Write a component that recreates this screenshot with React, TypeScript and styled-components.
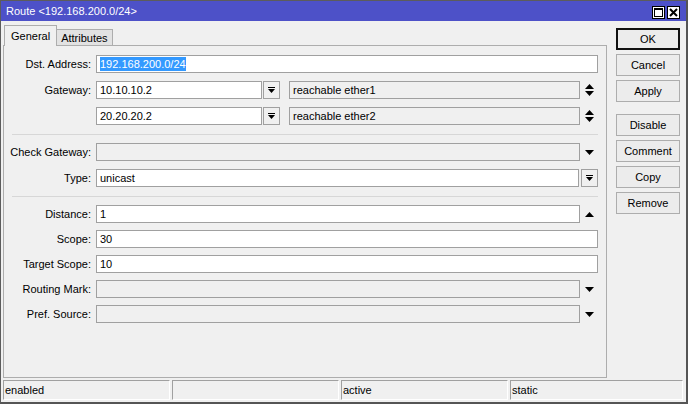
import styled, { createGlobalStyle } from "styled-components";

const GlobalStyle = createGlobalStyle`
    body {
        margin: 0;
        background: #ffffff;
        font-family: "Liberation Sans", Arial, sans-serif;
        font-size: 11px;
        color: #000000;
    }
`;

const DropIcon = () => (
    <svg width="7" height="7" viewBox="0 0 7 7">
        <rect x="0" y="0" width="7" height="1" fill="#000" />
        <polygon points="0,2 7,2 3.5,6" fill="#000" />
    </svg>
);

const UpDownIcon = () => (
    <svg width="9" height="12" viewBox="0 0 9 12">
        <polygon points="4.5,0 9,5 0,5" fill="#000" />
        <polygon points="0,7 9,7 4.5,12" fill="#000" />
    </svg>
);

const ArrowIcon = ({ up }: { up?: boolean }) => (
    <svg width="9" height="5" viewBox="0 0 9 5">
        {up ? <polygon points="4.5,0 9,5 0,5" fill="#000" /> : <polygon points="0,0 9,0 4.5,5" fill="#000" />}
    </svg>
);

const MaxIcon = () => (
    <svg width="9" height="9" viewBox="0 0 9 9">
        <rect x="0.5" y="0.5" width="8" height="8" fill="none" stroke="#000" />
        <rect x="0" y="0" width="9" height="2" fill="#000" />
    </svg>
);

const CloseIcon = () => (
    <svg width="9" height="9" viewBox="0 0 9 9">
        <path d="M1 1 L8 8 M8 1 L1 8" stroke="#000" strokeWidth="2" />
    </svg>
);

const App = () => {
    return (
        <>
            <GlobalStyle />
            <Window>
                <TitleBar>
                    <TitleText>Route &lt;192.168.200.0/24&gt;</TitleText>
                    <TitleButtons>
                        <TitleButton><MaxIcon /></TitleButton>
                        <TitleButton><CloseIcon /></TitleButton>
                    </TitleButtons>
                </TitleBar>
                <Body>
                    <Main>
                        <Tabs>
                            <Tab $active>General</Tab>
                            <Tab>Attributes</Tab>
                        </Tabs>
                        <Panel>
                            <Group>
                                <Row>
                                    <Label>Dst. Address:</Label>
                                    <Field>
                                        <Selected>192.168.200.0/24</Selected>
                                    </Field>
                                </Row>
                                <Row>
                                    <Label>Gateway:</Label>
                                    <Field $width={166}>10.10.10.2</Field>
                                    <DropButton $ml={1}><DropIcon /></DropButton>
                                    <Field $disabled $ml={9}>reachable ether1</Field>
                                    <IconSlot><UpDownIcon /></IconSlot>
                                </Row>
                                <Row>
                                    <Label></Label>
                                    <Field $width={166}>20.20.20.2</Field>
                                    <DropButton $ml={1}><DropIcon /></DropButton>
                                    <Field $disabled $ml={9}>reachable ether2</Field>
                                    <IconSlot><UpDownIcon /></IconSlot>
                                </Row>
                            </Group>
                            <Separator />
                            <Group>
                                <Row>
                                    <Label>Check Gateway:</Label>
                                    <Field $disabled />
                                    <IconSlot><ArrowIcon /></IconSlot>
                                </Row>
                                <Row>
                                    <Label>Type:</Label>
                                    <Field>unicast</Field>
                                    <DropButton $ml={2}><DropIcon /></DropButton>
                                </Row>
                            </Group>
                            <Separator />
                            <Group $gap={7}>
                                <Row>
                                    <Label>Distance:</Label>
                                    <Field>1</Field>
                                    <IconSlot><ArrowIcon up /></IconSlot>
                                </Row>
                                <Row>
                                    <Label>Scope:</Label>
                                    <Field>30</Field>
                                </Row>
                                <Row>
                                    <Label>Target Scope:</Label>
                                    <Field>10</Field>
                                </Row>
                                <Row>
                                    <Label>Routing Mark:</Label>
                                    <Field $disabled />
                                    <IconSlot><ArrowIcon /></IconSlot>
                                </Row>
                                <Row>
                                    <Label>Pref. Source:</Label>
                                    <Field $disabled />
                                    <IconSlot><ArrowIcon /></IconSlot>
                                </Row>
                            </Group>
                        </Panel>
                    </Main>
                    <Side>
                        <Button $default>OK</Button>
                        <Button>Cancel</Button>
                        <Button>Apply</Button>
                        <ButtonGap />
                        <Button>Disable</Button>
                        <Button>Comment</Button>
                        <Button>Copy</Button>
                        <Button>Remove</Button>
                    </Side>
                </Body>
                <StatusBar>
                    <StatusCell>enabled</StatusCell>
                    <StatusCell></StatusCell>
                    <StatusCell>active</StatusCell>
                    <StatusCell>static</StatusCell>
                </StatusBar>
            </Window>
        </>
    );
};

const Window = styled.div`
    width: 688px;
    height: 404px;
    box-sizing: border-box;
    border-top: 1px solid #5c5c5c;
    border-left: 1px solid #5c5c5c;
    border-right: 2px solid #555555;
    border-bottom: 2px solid #555555;
    background-color: #f0f0f0;
    display: flex;
    flex-direction: column;
`;

const TitleBar = styled.div`
    height: 20px;
    flex: none;
    background-color: #4d51c8;
    color: #ffffff;
    display: flex;
    align-items: center;
    justify-content: space-between;
    padding: 0 6px 0 5px;
`;

const TitleText = styled.span`
    font-size: 11px;
    line-height: 20px;
`;

const TitleButtons = styled.div`
    display: flex;
    gap: 2px;
    margin-top: 2px;
`;

const TitleButton = styled.div`
    width: 13px;
    height: 13px;
    box-sizing: border-box;
    background-color: #ffffff;
    border: 1px solid #000000;
    display: flex;
    align-items: center;
    justify-content: center;
`;

const Body = styled.div`
    display: flex;
    gap: 9px;
    padding: 4px 6px 0 2px;
`;

const Main = styled.div`
    width: 604px;
    display: flex;
    flex-direction: column;
`;

const Tabs = styled.div`
    display: flex;
    align-items: flex-end;
    height: 21px;
    padding-left: 1px;
    margin-bottom: -1px;
`;

const Tab = styled.div<{ $active?: boolean }>`
    box-sizing: border-box;
    height: ${(p) => (p.$active ? "21px" : "17px")};
    padding: 0 ${(p) => (p.$active ? "6px" : "4px")};
    background-color: ${(p) => (p.$active ? "#f0f0f0" : "#e2e2e2")};
    border: 1px solid #adadad;
    border-bottom: ${(p) => (p.$active ? "none" : "1px solid #adadad")};
    border-left: ${(p) => (p.$active ? "1px solid #adadad" : "none")};
    line-height: ${(p) => (p.$active ? "20px" : "16px")};
    position: relative;
    z-index: ${(p) => (p.$active ? 1 : 0)};
    white-space: nowrap;
`;

const Panel = styled.div`
    height: 333px;
    box-sizing: border-box;
    border: 1px solid #adadad;
    padding: 9px 8px 0 0;
    display: flex;
    flex-direction: column;
`;

const Group = styled.div<{ $gap?: number }>`
    display: flex;
    flex-direction: column;
    gap: ${(p) => p.$gap ?? 8}px;
`;

const Row = styled.div`
    display: flex;
    align-items: center;
    height: 18px;
`;

const Label = styled.div`
    width: 87px;
    flex: none;
    margin-right: 5px;
    text-align: right;
    white-space: nowrap;
`;

const Field = styled.div<{ $disabled?: boolean; $width?: number; $ml?: number }>`
    box-sizing: border-box;
    height: 18px;
    ${(p) => (p.$width ? `width: ${p.$width}px; flex: none;` : "flex: 1;")}
    margin-left: ${(p) => p.$ml ?? 0}px;
    border: 1px solid #a0a0a0;
    background-color: ${(p) => (p.$disabled ? "#f0f0f0" : "#ffffff")};
    padding: 0 3px;
    font-size: 11px;
    line-height: 16px;
    white-space: nowrap;
    overflow: hidden;
`;

const Selected = styled.span`
    display: inline-block;
    background-color: #3399ff;
    color: #ffffff;
    line-height: 14px;
`;

const DropButton = styled.div<{ $ml?: number }>`
    width: 17px;
    height: 18px;
    flex: none;
    box-sizing: border-box;
    margin-left: ${(p) => p.$ml ?? 0}px;
    border: 1px solid #a0a0a0;
    background-color: #f0f0f0;
    display: flex;
    align-items: center;
    justify-content: center;
`;

const IconSlot = styled.div`
    width: 18px;
    flex: none;
    display: flex;
    align-items: center;
    justify-content: center;
`;

const Separator = styled.div`
    height: 1px;
    background-color: #d7d7d7;
    margin: 9px 0 8px 8px;
`;

const Side = styled.div`
    width: 64px;
    display: flex;
    flex-direction: column;
    gap: 4px;
    padding-top: 3px;
`;

const ButtonGap = styled.div`
    height: 4px;
`;

const Button = styled.div<{ $default?: boolean }>`
    height: 22px;
    box-sizing: border-box;
    border: 1px solid ${(p) => (p.$default ? "#111111" : "#adadad")};
    box-shadow: ${(p) => (p.$default ? "inset 0 0 0 1px #111111" : "none")};
    background-color: #ececec;
    display: flex;
    align-items: center;
    justify-content: center;
    font-size: 11px;
`;

const StatusBar = styled.div`
    display: grid;
    grid-template-columns: 167px 167px 167px 1fr;
    gap: 2px;
    height: 20px;
    margin: 2px 3px 2px 2px;
`;

const StatusCell = styled.div`
    box-sizing: border-box;
    border-top: 1px solid #a0a0a0;
    border-left: 1px solid #a0a0a0;
    border-right: 1px solid #ffffff;
    border-bottom: 1px solid #ffffff;
    padding-left: 1px;
    line-height: 18px;
    white-space: nowrap;
`;

export default App;
